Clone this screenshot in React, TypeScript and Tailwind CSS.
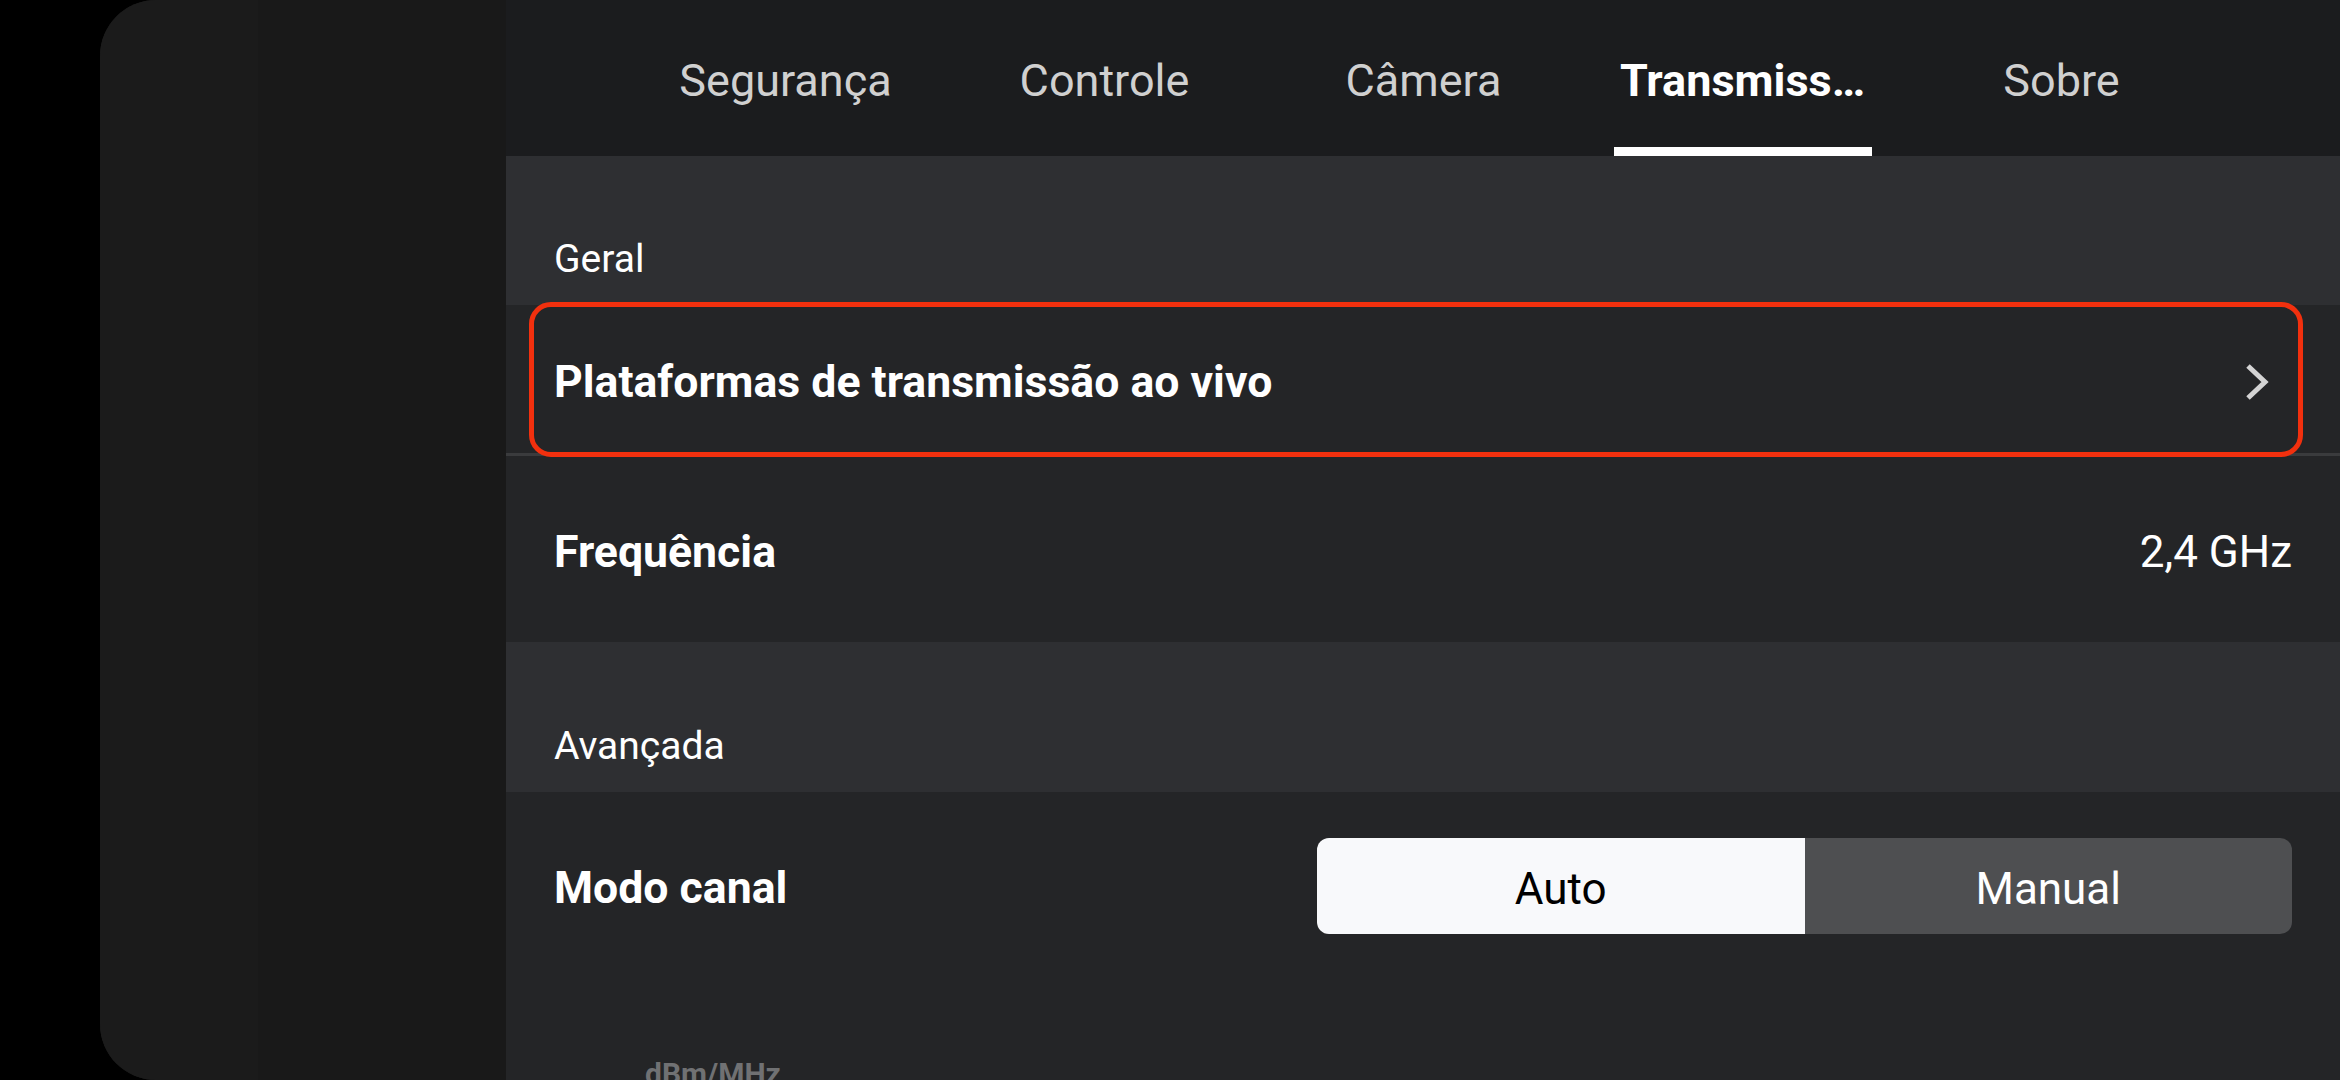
import { useState } from 'react'

const TABS = ['Segurança', 'Controle', 'Câmera', 'Transmiss…', 'Sobre']

const Chevron = () => (
  <svg width="24" height="36" viewBox="0 0 24 36" className="shrink-0">
    <polyline points="3,2 20,18 3,34" fill="none" stroke="#d4d4d4" strokeWidth="5" />
  </svg>
)

export default function App() {
  const [tab, setTab] = useState(3)
  const [mode, setMode] = useState<'auto' | 'manual'>('auto')

  return (
    <div className="w-[2340px] h-[1080px] bg-black flex overflow-hidden" style={{ fontFamily: 'Roboto, "Noto Sans", sans-serif' }}>
      <div className="ml-[100px] flex-1 flex rounded-l-[56px] overflow-hidden bg-[#1b1b1b]">
        {/* Left blank panel */}
        <div className="w-[158px] bg-[#1b1b1b]" />
        <div className="w-[248px] bg-[#191919]" />

        {/* Main */}
        <div className="flex-1 flex flex-col bg-[#242527]">
          {/* Tabs */}
          <div className="h-[156px] shrink-0 bg-[#1b1c1e] flex pl-[120px] pt-[5px]">
            {TABS.map((t, i) => (
              <button
                key={t}
                onClick={() => setTab(i)}
                className="relative w-[319px] h-full flex items-center justify-center"
              >
                <span className={i === tab ? 'text-[45px] font-bold text-white' : 'text-[45px] text-[#d0d0d0]'}>{t}</span>
                {i === tab && <div className="absolute bottom-0 left-1/2 -translate-x-1/2 w-[258px] h-[9px] bg-white" />}
              </button>
            ))}
          </div>

          {/* Geral header */}
          <div className="h-[149px] shrink-0 bg-[#2e2f32] px-12 pt-[84px]">
            <span className="text-[39px] leading-none text-white">Geral</span>
          </div>

          {/* Plataformas row */}
          <div className="relative h-[148px] shrink-0 flex items-center justify-between px-12 pt-[6px]">
            <span className="text-[44.6px] font-bold text-white">Plataformas de transmissão ao vivo</span>
            <div className="mr-[23px]"><Chevron /></div>
            <div className="absolute left-[23px] right-[37px] top-[-3px] bottom-[-4px] border-[5px] border-[#f2300e] rounded-[22px] pointer-events-none" />
          </div>
          <div className="h-[3px] shrink-0 bg-[#3a3b3d]" />

          {/* Frequência row */}
          <div className="h-[186px] shrink-0 flex items-center justify-between px-12 pt-[6px]">
            <span className="text-[44.6px] font-bold text-white">Frequência</span>
            <span className="text-[44px] text-white">2,4 GHz</span>
          </div>

          {/* Avançada header */}
          <div className="h-[150px] shrink-0 bg-[#2e2f32] px-12 pt-[85px]">
            <span className="text-[39px] leading-none text-white">Avançada</span>
          </div>

          {/* Modo canal */}
          <div className="h-[188px] shrink-0 flex items-center justify-between px-12">
            <span className="text-[44.6px] font-bold text-white pt-[4px]">Modo canal</span>
            <div className="w-[975px] h-[96px] flex rounded-[12px] overflow-hidden">
              <button
                onClick={() => setMode('auto')}
                className={mode === 'auto' ? 'flex-1 bg-[#f8f9fb] text-black text-[44px] pt-[5px]' : 'flex-1 bg-[#4e4f51] text-white text-[44px] pt-[5px]'}
              >
                Auto
              </button>
              <button
                onClick={() => setMode('manual')}
                className={mode === 'manual' ? 'flex-1 bg-[#f8f9fb] text-black text-[44px] pt-[5px]' : 'flex-1 bg-[#4e4f51] text-white text-[44px] pt-[5px]'}
              >
                Manual
              </button>
            </div>
          </div>

          {/* Chart area */}
          <div className="flex-1 pt-[79px] pl-[139px]">
            <span className="text-[30px] leading-none font-bold text-[#707173]">dBm/MHz</span>
          </div>
        </div>
      </div>
    </div>
  )
}
